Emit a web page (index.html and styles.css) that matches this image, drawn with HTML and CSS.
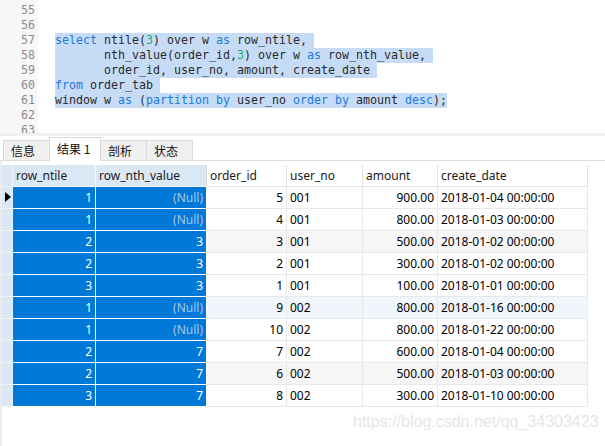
FILE: index.html
```html
<!DOCTYPE html>
<html>
<head>
<meta charset="utf-8">
<link rel="stylesheet" href="styles.css">
</head>
<body>
<div class="editor">
  <div class="gutter">
    <div>55</div><div>56</div><div>57</div><div>58</div><div>59</div><div>60</div><div>61</div><div>62</div><div>63</div>
  </div>
  <div class="code">
    <div class="line">&nbsp;</div>
    <div class="line">&nbsp;</div>
    <div class="line"><span class="sel"><span class="kw">select</span> ntile(<span class="num">3</span>) over w <span class="kw">as</span> row_ntile, </span></div>
    <div class="line"><span class="sel">       nth_value(order_id,<span class="num">3</span>) over w <span class="kw">as</span> row_nth_value, </span></div>
    <div class="line"><span class="sel">       order_id, user_no, amount, create_date </span></div>
    <div class="line"><span class="sel"><span class="kw">from</span> order_tab </span></div>
    <div class="line"><span class="sel">window w <span class="kw">as</span> (<span class="kw">partition</span> <span class="kw">by</span> user_no <span class="kw">order</span> <span class="kw">by</span> amount <span class="kw">desc</span>);</span></div>
    <div class="line">&nbsp;</div>
    <div class="line">&nbsp;</div>
  </div>
</div>
<div class="divider"></div>
<div class="tabs">
  <div class="tab">信息</div>
  <div class="tab active">结果 1</div>
  <div class="tab">剖析</div>
  <div class="tab">状态</div>
</div>
<div class="panel">
  <div class="grid">
    <div class="h ind"></div>
    <div class="h hs">row_ntile</div>
    <div class="h hs">row_nth_value</div>
    <div class="h">order_id</div>
    <div class="h">user_no</div>
    <div class="h">amount</div>
    <div class="h">create_date</div>

    <div class="ind"><span class="arrow"></span></div>
    <div class="s r">1</div><div class="s r null">(Null)</div><div class="c r">5</div><div class="c">001</div><div class="c r">900.00</div><div class="c">2018-01-04 00:00:00</div>

    <div class="ind"></div>
    <div class="s r">1</div><div class="s r null">(Null)</div><div class="c r">4</div><div class="c">001</div><div class="c r">800.00</div><div class="c">2018-01-03 00:00:00</div>

    <div class="ind"></div>
    <div class="s r">2</div><div class="s r">3</div><div class="c r g">3</div><div class="c g">001</div><div class="c r g">500.00</div><div class="c g">2018-01-02 00:00:00</div>

    <div class="ind"></div>
    <div class="s r">2</div><div class="s r">3</div><div class="c r">2</div><div class="c">001</div><div class="c r">300.00</div><div class="c">2018-01-02 00:00:00</div>

    <div class="ind"></div>
    <div class="s r">3</div><div class="s r">3</div><div class="c r">1</div><div class="c">001</div><div class="c r">100.00</div><div class="c">2018-01-01 00:00:00</div>

    <div class="ind"></div>
    <div class="s r">1</div><div class="s r null">(Null)</div><div class="c r b">9</div><div class="c b">002</div><div class="c r b">800.00</div><div class="c b">2018-01-16 00:00:00</div>

    <div class="ind"></div>
    <div class="s r">1</div><div class="s r null">(Null)</div><div class="c r">10</div><div class="c">002</div><div class="c r">800.00</div><div class="c">2018-01-22 00:00:00</div>

    <div class="ind"></div>
    <div class="s r">2</div><div class="s r">7</div><div class="c r">7</div><div class="c">002</div><div class="c r">600.00</div><div class="c">2018-01-04 00:00:00</div>

    <div class="ind"></div>
    <div class="s r">2</div><div class="s r">7</div><div class="c r g">6</div><div class="c g">002</div><div class="c r g">500.00</div><div class="c g">2018-01-03 00:00:00</div>

    <div class="ind"></div>
    <div class="s r">3</div><div class="s r">7</div><div class="c r">8</div><div class="c">002</div><div class="c r">300.00</div><div class="c">2018-01-10 00:00:00</div>
  </div>
  <div class="watermark">https://blog.csdn.net/qq_34303423</div>
</div>
</body>
</html>
```
FILE: styles.css
```css
html, body {
  margin: 0;
  padding: 0;
  background: #fff;
  width: 605px;
  height: 446px;
  overflow: hidden;
}

.editor {
  display: flex;
  height: 133px;
  overflow: hidden;
  font-family: "DejaVu Sans Mono", "Liberation Mono", monospace;
  font-size: 11.63px;
}

.gutter {
  width: 38px;
  background: #f7f7f7;
  padding-top: 3px;
  box-sizing: border-box;
  color: #8e8a86;
  text-align: right;
  padding-right: 3px;
}

.gutter div,
.line {
  height: 15px;
  line-height: 15px;
}

.code {
  padding-top: 3px;
  padding-left: 17px;
  color: #2a2a2a;
}

.line {
  white-space: pre;
}

.sel {
  background: #c6dcf6;
  display: inline-block;
  height: 15px;
}

.kw { color: #2179dc; }
.num { color: #17b06c; }

.divider {
  height: 3px;
  background: #f0f0f0;
}

.tabs {
  display: flex;
  align-items: flex-end;
  height: 25px;
  padding-left: 3px;
  border-bottom: 1px solid #dcdcdc;
  box-sizing: border-box;
  font-family: "Noto Sans CJK SC", "Noto Sans", sans-serif;
  font-size: 12px;
  color: #111;
}

.tab {
  height: 20px;
  line-height: 19px;
  background: #f0f0f0;
  border: 1px solid #d9d9d9;
  border-bottom: none;
  box-sizing: border-box;
  padding-left: 7px;
  width: 47px;
  margin-right: -1px;
}

.tab.active {
  background: #fff;
  height: 24px;
  line-height: 21px;
  width: 52px;
  margin-bottom: -1px;
  position: relative;
  z-index: 1;
}

.panel {
  position: relative;
  border-left: 2px solid #ececec;
  height: 285px;
  box-sizing: border-box;
  padding-top: 4px;
}

.grid {
  display: grid;
  grid-template-columns: 11px 83px 111px 80px 76px 75px 150px;
  grid-auto-rows: 22px;
  font-family: "Noto Sans", "Open Sans", sans-serif;
  font-size: 12px;
  color: #000;
}

.grid > div {
  box-sizing: border-box;
  line-height: 22px;
  white-space: nowrap;
  padding: 0 3px;
}

.h {
  background: #fff;
  border-right: 1px solid #e3e3e3;
  border-bottom: 1px solid #e3e3e3;
  color: #1a1a1a;
}

.hs {
  background: #dae8f6;
  border-right: 1px solid #f2f7fc;
  border-bottom: 1px solid #f2f7fc;
}

.h.hs:nth-child(3) {
  border-right-color: #d8d8d8;
}

.grid > .ind {
  background: #dae8f6;
  border-bottom: 1px solid #eef4fb;
  border-right: 1px solid #eef4fb;
  padding: 0;
  position: relative;
}

.arrow {
  position: absolute;
  left: 3px;
  top: 5px;
  width: 0;
  height: 0;
  border-top: 5px solid transparent;
  border-bottom: 5px solid transparent;
  border-left: 6px solid #000;
}

.s {
  background: #0078d7;
  color: #fff;
  border-right: 1px solid #fff;
  border-bottom: 1px solid #fff;
}

.s.null { color: #a7c6ea; }

.c {
  background: #fff;
  border-right: 1px solid #e8e8e8;
  border-bottom: 1px solid #e8e8e8;
}

.c.g { background: #f6f6f6; }
.c.b { background: #f1f6fc; }

.r { text-align: right; }

.watermark {
  position: absolute;
  left: 351px;
  top: 252px;
  font-family: "Liberation Sans", Arial, sans-serif;
  font-size: 16px;
  color: #e6e6e6;
  white-space: nowrap;
}
```
